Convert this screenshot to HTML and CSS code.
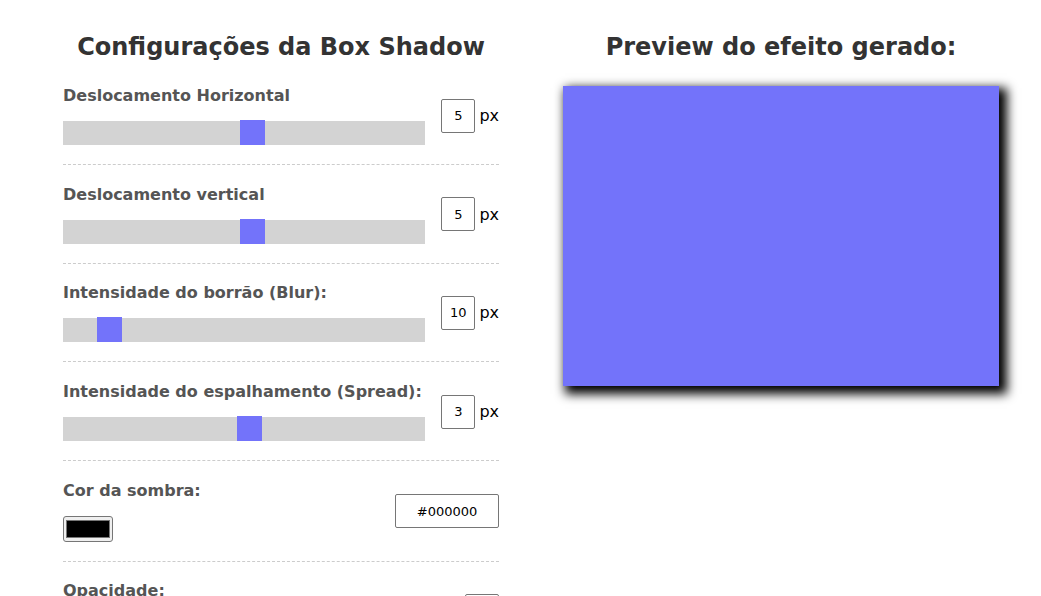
FILE: index.html
```html
<!DOCTYPE html>
<html lang="pt-BR">
<head>
<meta charset="utf-8">
<title>Box Shadow Generator</title>
<link rel="stylesheet" href="styles.css">
</head>
<body>
<div class="app">
  <section class="settings">
    <h2 class="title">Configurações da Box Shadow</h2>
    <div class="row">
      <div class="field">
        <label class="label">Deslocamento Horizontal</label>
        <div class="track"><span class="thumb" style="left: calc(0.525 * (100% - 25px))"></span></div>
      </div>
      <div class="value"><span class="num">5</span><span class="unit">px</span></div>
    </div>
    <div class="row">
      <div class="field">
        <label class="label">Deslocamento vertical</label>
        <div class="track"><span class="thumb" style="left: calc(0.525 * (100% - 25px))"></span></div>
      </div>
      <div class="value"><span class="num">5</span><span class="unit">px</span></div>
    </div>
    <div class="row">
      <div class="field">
        <label class="label">Intensidade do borrão (Blur):</label>
        <div class="track"><span class="thumb" style="left: calc(0.1 * (100% - 25px))"></span></div>
      </div>
      <div class="value"><span class="num">10</span><span class="unit">px</span></div>
    </div>
    <div class="row">
      <div class="field">
        <label class="label">Intensidade do espalhamento (Spread):</label>
        <div class="track"><span class="thumb" style="left: calc(0.515 * (100% - 25px))"></span></div>
      </div>
      <div class="value"><span class="num">3</span><span class="unit">px</span></div>
    </div>
    <div class="row">
      <div class="field">
        <label class="label">Cor da sombra:</label>
        <div class="swatch"><span class="swatch-fill"></span></div>
      </div>
      <div class="value"><span class="hex">#000000</span></div>
    </div>
    <div class="row">
      <div class="field">
        <label class="label">Opacidade:</label>
        <div class="track"><span class="thumb" style="left: calc(1 * (100% - 25px))"></span></div>
      </div>
      <div class="value"><span class="num num-wide">1</span></div>
    </div>
  </section>
  <section class="preview">
    <h2 class="title">Preview do efeito gerado:</h2>
    <div class="box"></div>
  </section>
</div>
</body>
</html>
```
FILE: styles.css
```css
html, body {
  margin: 0;
  padding: 0;
  background: #fff;
  overflow: hidden;
}
body {
  font-family: "DejaVu Sans", Verdana, sans-serif;
  color: #333;
}
.app {
  display: flex;
  gap: 64px;
  padding: 0 42px 0 63px;
}
.settings, .preview {
  width: 436px;
  flex: none;
}
.title {
  margin: 30px 0 0;
  font-size: 24px;
  line-height: 34px;
  font-weight: bold;
  text-align: center;
  color: #333;
}
.settings .title {
  margin-bottom: 22px;
}
.row {
  display: flex;
  align-items: center;
  justify-content: space-between;
  padding: 0 0 19px;
  margin-bottom: 19.7px;
  border-bottom: 1px dashed #ccc;
}
.field {
  display: flex;
  flex-direction: column;
}
.label {
  font-size: 16px;
  font-weight: bold;
  color: #555;
  line-height: 20px;
  margin-bottom: 15px;
}
.track {
  position: relative;
  width: 362px;
  height: 24px;
  background: #d3d3d3;
}
.thumb {
  position: absolute;
  top: -1px;
  width: 25px;
  height: 25px;
  background: #7373fa;
}
.value {
  display: flex;
  align-items: center;
  gap: 4px;
}
.num {
  box-sizing: border-box;
  width: 34px;
  height: 34px;
  border: 1px solid #767676;
  border-radius: 2px;
  font-size: 13px;
  display: flex;
  align-items: center;
  justify-content: center;
  color: #000;
}
.unit {
  font-size: 16px;
  color: #000;
}
.hex {
  box-sizing: border-box;
  width: 104px;
  height: 34px;
  border: 1px solid #767676;
  border-radius: 2px;
  font-size: 13px;
  display: flex;
  align-items: center;
  justify-content: center;
  color: #000;
}
.swatch {
  box-sizing: border-box;
  width: 50px;
  height: 26px;
  border: 1px solid #767676;
  border-radius: 3px;
  background: #efefef;
  padding: 3px 2px;
}
.swatch-fill {
  display: block;
  height: 100%;
  background: #000;
  border: 1px solid #777;
  box-sizing: border-box;
}
.preview .title {
  margin-bottom: 22px;
}
.box {
  width: 436px;
  height: 300px;
  background: #7373fa;
  box-shadow: 5px 5px 10px 3px #000;
}
```
